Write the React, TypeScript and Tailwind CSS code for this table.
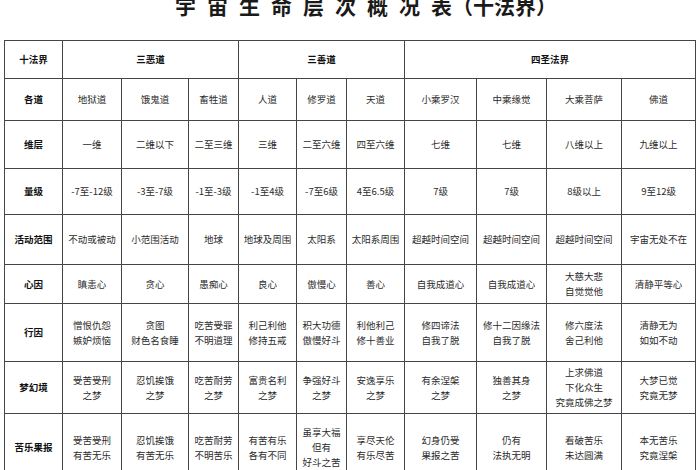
import React from "react";

// 宇宙生命层次概况表 (十法界)

type Cell = string | string[];

const colWidths = [58, 59, 67, 50, 58, 50, 58, 72, 70, 75, 74];

const rows: { label: string; height: number; cells: Cell[] }[] = [
  {
    label: "各道",
    height: 42,
    cells: ["地狱道", "饿鬼道", "畜牲道", "人道", "修罗道", "天道", "小乘罗汉", "中乘缘觉", "大乘菩萨", "佛道"],
  },
  {
    label: "维层",
    height: 48,
    cells: ["一维", "二维以下", "二至三维", "三维", "二至六维", "四至六维", "七维", "七维", "八维以上", "九维以上"],
  },
  {
    label: "量级",
    height: 46,
    cells: ["-7至-12级", "-3至-7级", "-1至-3级", "-1至4级", "-7至6级", "4至6.5级", "7级", "7级", "8级以上", "9至12级"],
  },
  {
    label: "活动范围",
    height: 50,
    cells: ["不动或被动", "小范围活动", "地球", "地球及周围", "太阳系", "太阳系周围", "超越时间空间", "超越时间空间", "超越时间空间", "宇宙无处不在"],
  },
  {
    label: "心因",
    height: 39,
    cells: ["瞋恚心", "贪心", "愚痴心", "良心", "傲慢心", "善心", "自我成道心", "自我成道心", ["大慈大悲", "自觉觉他"], "清静平等心"],
  },
  {
    label: "行因",
    height: 58,
    cells: [
      ["憎恨仇怨", "嫉妒烦恼"],
      ["贪图", "财色名食睡"],
      ["吃苦受罪", "不明道理"],
      ["利己利他", "修持五戒"],
      ["积大功德", "傲慢好斗"],
      ["利他利己", "修十善业"],
      ["修四谛法", "自我了脱"],
      ["修十二因缘法", "自我了脱"],
      ["修六度法", "舍己利他"],
      ["清静无为", "如如不动"],
    ],
  },
  {
    label: "梦幻境",
    height: 52,
    cells: [
      ["受苦受刑", "之梦"],
      ["忍饥挨饿", "之梦"],
      ["吃苦耐劳", "之梦"],
      ["富贵名利", "之梦"],
      ["争强好斗", "之梦"],
      ["安逸享乐", "之梦"],
      ["有余涅槃", "之梦"],
      ["独善其身", "之梦"],
      ["上求佛道", "下化众生", "究竟成佛之梦"],
      ["大梦已觉", "究竟无梦"],
    ],
  },
  {
    label: "苦乐果报",
    height: 68,
    cells: [
      ["受苦受刑", "有苦无乐"],
      ["忍饥挨饿", "有苦无乐"],
      ["吃苦耐劳", "不明苦乐"],
      ["有苦有乐", "各有不同"],
      ["虽享大福", "但有", "好斗之苦"],
      ["享尽天伦", "有乐尽苦"],
      ["幻身仍受", "果报之苦"],
      ["仍有", "法执无明"],
      ["看破苦乐", "未达圆满"],
      ["本无苦乐", "究竟涅槃"],
    ],
  },
];

const cellBase = "border border-[#454545] text-center align-middle p-0";

const CellText: React.FC<{ value: Cell }> = ({ value }) => {
  const lines = Array.isArray(value) ? value : [value];
  return (
    <div className="flex flex-col items-center leading-[15px]">
      {lines.map((line, i) => (
        <span key={i} className="whitespace-nowrap">
          {line}
        </span>
      ))}
    </div>
  );
};

export default function App() {
  const titleMain = ["宇", "宙", "生", "命", "层", "次", "概", "况", "表"];

  return (
    <div
      className="w-[700px] h-[470px] overflow-hidden bg-white"
      style={{ fontFamily: '"Noto Sans CJK SC", "Noto Sans", sans-serif' }}
    >
      {/* Title, top edge cut off in the source */}
      <div className="h-[40px] pl-[175px] overflow-hidden">
        <div className="-mt-[5px] flex text-[21px] leading-[21px] font-bold text-[#1a1a1a]">
          {titleMain.map((ch, i) => (
            <span key={i} className={i < titleMain.length - 1 ? "mr-[11px]" : ""}>
              {ch}
            </span>
          ))}
          <span>（十法界）</span>
        </div>
      </div>

      <table className="ml-[4px] w-[691px] table-fixed border-collapse text-[9.5px] text-[#2b2b2b]">
        <colgroup>
          {colWidths.map((w, i) => (
            <col key={i} style={{ width: w }} />
          ))}
        </colgroup>
        <tbody>
          <tr className="h-[38px]">
            <td className={`${cellBase} font-bold text-[#111]`}>十法界</td>
            <td colSpan={3} className={`${cellBase} font-bold text-[#111]`}>
              三恶道
            </td>
            <td colSpan={3} className={`${cellBase} font-bold text-[#111]`}>
              三善道
            </td>
            <td colSpan={4} className={`${cellBase} font-bold text-[#111]`}>
              四圣法界
            </td>
          </tr>
          {rows.map((row) => (
            <tr key={row.label} style={{ height: row.height }}>
              <td className={`${cellBase} font-bold text-[#111] whitespace-nowrap`}>{row.label}</td>
              {row.cells.map((c, i) => (
                <td key={i} className={cellBase}>
                  <CellText value={c} />
                </td>
              ))}
            </tr>
          ))}
        </tbody>
      </table>
    </div>
  );
}
